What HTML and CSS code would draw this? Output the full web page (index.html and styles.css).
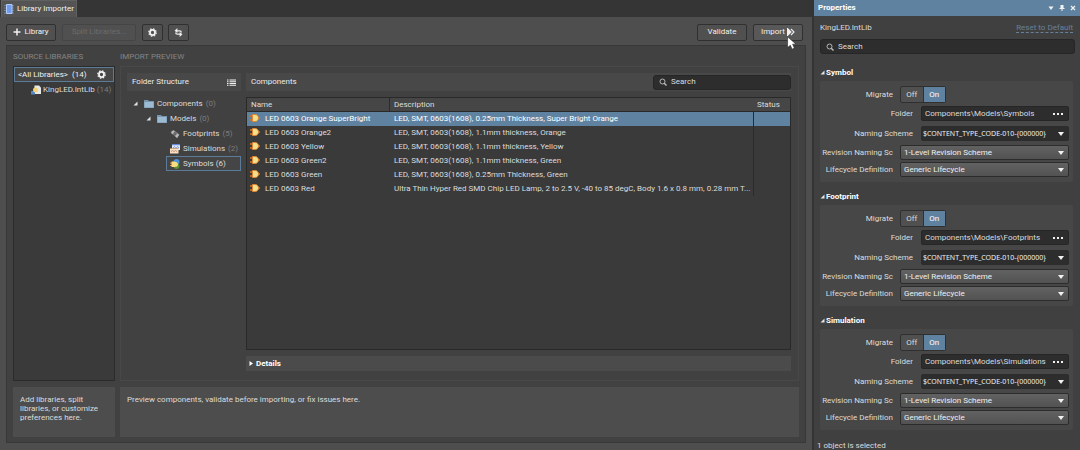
FILE: index.html
```html
<!DOCTYPE html>
<html lang="en">
<head>
<meta charset="utf-8">
<title>Library Importer</title>
<link rel="stylesheet" href="styles.css">
</head>
<body>
<svg class="defs" aria-hidden="true">
  <symbol id="gear" viewBox="0 0 16 16"><g fill="none" stroke="currentColor"><circle cx="8" cy="8" r="4.5" stroke-width="3.2"/><circle cx="8" cy="8" r="6.7" stroke-width="2" stroke-dasharray="2.7 2.56"/></g></symbol>
  <symbol id="search" viewBox="0 0 16 16"><circle cx="7" cy="7" r="5" fill="none" stroke="currentColor" stroke-width="2"/><path d="M10.5 10.5L15 15" stroke="currentColor" stroke-width="3"/></symbol>
  <symbol id="folder" viewBox="0 0 20 16"><path d="M0 0h8l2 2h10v14H0z" fill="#7795ad"/><path d="M1 4h18v11H1z" fill="#9dbbd3"/></symbol>
  <symbol id="gate" viewBox="0 0 20 16"><path d="M0 4h6M0 12h6M14 8h6" stroke="#d87624" stroke-width="3"/><path d="M5 1h5c5 0 7 4 7 7s-2 7-7 7H5V1z" fill="#f3e08c" stroke="#df8430" stroke-width="2"/></symbol>
  <symbol id="expand" viewBox="0 0 10 10"><path d="M9 1v8H1z" fill="#e4e4e4"/></symbol>
</svg>
<div class="app">
  <section class="workspace">
    <header class="tabs">
      <div class="tab">
        <svg class="tab-icon" viewBox="0 0 20 20"><path d="M0 3h20M0 8h20M0 13h20M0 18h20" stroke="#8594ab" stroke-width="1.5"/><path d="M5 1h11v18H5z" fill="#6f9df0" stroke="#b3cdfb" stroke-width="2"/></svg>
        Library Importer
      </div>
    </header>
    <div class="toolbar">
      <button class="btn btn-library" type="button"><svg class="i8" viewBox="0 0 16 16"><path d="M8 1v14M1 8h14" stroke="currentColor" stroke-width="3"/></svg>Library</button>
      <button class="btn btn-split" type="button" disabled>Split Libraries...</button>
      <button class="btn btn-icon" type="button" aria-label="Settings"><svg class="i9"><use href="#gear"/></svg></button>
      <button class="btn btn-icon" type="button" aria-label="Refresh"><svg class="i9" viewBox="0 0 16 16"><g fill="none" stroke="currentColor" stroke-width="2.2"><path d="M4 5h6q3 0 3 3M12 11H6Q3 11 3 8"/></g><path d="M6 0v9L1 5zM10 7v9l5-5z" fill="currentColor"/></svg></button>
      <span class="spacer"></span>
      <button class="btn btn-action" type="button">Validate</button>
      <button class="btn btn-action btn-import" type="button">Import<svg class="i8" viewBox="0 0 16 16"><path d="M1 1l7 7-7 7zM8 2l6 6-6 6" fill="none" stroke="currentColor" stroke-width="2.2"/><path d="M1 1l7 7-7 7z" fill="currentColor"/></svg>
        <svg class="pointer" viewBox="0 0 16 24"><path d="M1 1v19l5-4 3 7 4-2-3-7h6z" fill="#fff" stroke="#222"/></svg></button>
    </div>
    <main class="board">
      <h2 class="caption">SOURCE LIBRARIES</h2>
      <h2 class="caption">IMPORT PREVIEW</h2>
      <div class="sources">
        <div class="source source-selected">&lt;All Libraries&gt; <span class="source-count">(14)</span><span class="spacer"></span><button class="plain" type="button" aria-label="Library settings"><svg class="i9"><use href="#gear"/></svg></button></div>
        <div class="source source-child"><svg class="i10" viewBox="0 0 20 20"><path d="M7 1h9l4 4v13H6z" fill="#e6e9e6"/><path d="M0 12h8v7H0z" fill="#5187c7"/><circle cx="9" cy="10" r="5" fill="#f5d477"/></svg>KingLED.IntLib <span class="muted">(14)</span></div>
      </div>
      <div class="preview">
        <div class="folders">
          <div class="bar">Folder Structure<span class="spacer"></span><button class="plain" type="button" aria-label="List view"><svg class="i9" viewBox="0 0 18 16"><path d="M0 3h3M5 3h13M0 6.5h3M5 6.5h13M0 10h3M5 10h13M0 13.5h3M5 13.5h13" stroke="currentColor" stroke-width="2"/></svg></button></div>
          <ul class="tree">
            <li class="node"><svg class="i4"><use href="#expand"/></svg><svg class="i10"><use href="#folder"/></svg>Components <span class="muted">(0)</span></li>
            <li class="node level-2"><svg class="i4"><use href="#expand"/></svg><svg class="i10"><use href="#folder"/></svg>Models <span class="muted">(0)</span></li>
            <li class="node level-3"><svg class="i10" viewBox="0 0 20 20"><path d="M1 6l6-4 12 9-5 7z" fill="#8d8d8d"/><path d="M6 3L2 8l4 3 4-6zM14 9l-4 5 4 4 4-6z" fill="#b7b7b7"/><path d="M9 5l5 4-4 5-4-4z" fill="#696969"/></svg>Footprints <span class="muted">(5)</span></li>
            <li class="node level-3"><svg class="i10" viewBox="0 0 20 20"><path d="M4 0h16v12H4z" fill="#dfe8fa"/><path d="M4 1h16" stroke="#6389d9" stroke-width="3"/><path d="M6 8l3-3 3 4 3-4 3 3" fill="none" stroke="#6389d9" stroke-width="1.5"/><path d="M0 9h17v10H0z" fill="#f8dfc5"/><path d="M0 9h17M2 16l3-4 3 4 3-4 3 4" fill="none" stroke="#bd9069" stroke-width="1.5"/></svg>Simulations <span class="muted">(2)</span></li>
            <li class="node level-3 node-selected"><svg class="i10" viewBox="0 0 20 20"><circle cx="13" cy="6" r="6" fill="#4d93de"/><circle cx="13" cy="14" r="6" fill="#5b8f39"/><path d="M0 8h4M0 13h4" stroke="#da9850" stroke-width="2"/><path d="M3 5h6q7 1 7 6t-7 5H3z" fill="#f8dc80"/></svg>Symbols (6)</li>
          </ul>
        </div>
        <div class="components">
          <div class="bar">Components<span class="spacer"></span><label class="search search-table"><svg class="i8"><use href="#search"/></svg><input type="text" placeholder="Search" aria-label="Search components"></label></div>
          <div class="grid">
            <table>
              <colgroup><col class="col-name"><col><col class="col-status"></colgroup>
              <thead><tr><th>Name</th><th>Description</th><th>Status</th></tr></thead>
              <tbody>
                <tr class="row-selected"><td><svg class="gate"><use href="#gate"/></svg>LED 0603 Orange SuperBright</td><td>LED, SMT, 0603(1608), 0.25mm Thickness, Super Bright Orange</td><td></td></tr>
                <tr><td><svg class="gate"><use href="#gate"/></svg>LED 0603 Orange2</td><td>LED, SMT, 0603(1608), 1.1mm thickness, Orange</td><td></td></tr>
                <tr><td><svg class="gate"><use href="#gate"/></svg>LED 0603 Yellow</td><td>LED, SMT, 0603(1608), 1.1mm thickness, Yellow</td><td></td></tr>
                <tr><td><svg class="gate"><use href="#gate"/></svg>LED 0603 Green2</td><td>LED, SMT, 0603(1608), 1.1mm thickness, Green</td><td></td></tr>
                <tr><td><svg class="gate"><use href="#gate"/></svg>LED 0603 Green</td><td>LED, SMT, 0603(1608), 0.25mm Thickness, Green</td><td></td></tr>
                <tr><td><svg class="gate"><use href="#gate"/></svg>LED 0603 Red</td><td>Ultra Thin Hyper Red SMD Chip LED Lamp, 2 to 2.5 V, -40 to 85 degC, Body 1.6 x 0.8 mm, 0.28 mm T...</td><td></td></tr>
              </tbody>
            </table>
          </div>
          <button class="details" type="button"><svg class="i4" viewBox="0 0 10 10"><path d="M1 0l7 5-7 5z" fill="currentColor"/></svg>Details</button>
        </div>
      </div>
      <p class="hint">Add libraries, split libraries, or customize preferences here.</p>
      <p class="hint">Preview components, validate before importing, or fix issues here.</p>
    </main>
  </section>
  <aside class="properties">
    <header class="panel-title">Properties<span class="spacer"></span>
      <button class="plain" type="button" aria-label="Menu"><svg class="i6" viewBox="0 0 12 12"><path d="M1 3h10l-5 7z" fill="currentColor"/></svg></button>
      <button class="plain" type="button" aria-label="Pin"><svg class="i6" viewBox="0 0 12 12"><path d="M3 0h6v6h2v2H7v4H5V8H1V6h2z" fill="currentColor"/></svg></button>
      <button class="plain" type="button" aria-label="Close"><svg class="i6" viewBox="0 0 12 12"><path d="M2 2l8 8M10 2l-8 8" stroke="currentColor" stroke-width="2.4"/></svg></button>
    </header>
    <div class="panel-body">
      <div class="object">KingLED.IntLib<span class="spacer"></span><a class="reset" href="#">Reset to Default</a></div>
      <label class="search search-panel"><svg class="i8"><use href="#search"/></svg><input type="text" placeholder="Search" aria-label="Search properties"></label>
      <section class="group">
        <h3><svg class="i4"><use href="#expand"/></svg>Symbol</h3>
        <div class="fields">
          <div class="field migrate"><span class="label">Migrate</span><div class="toggle"><button type="button">Off</button><button class="on" type="button" aria-pressed="true">On</button></div></div>
          <div class="field wide"><label class="label" for="f1">Folder</label><div class="path"><input id="f1" type="text" value="Components\Models\Symbols"><button class="plain dots" type="button" aria-label="Browse"></button></div></div>
          <div class="field wide naming"><label class="label" for="n1">Naming Scheme</label><div class="pick dark"><select id="n1"><option>$CONTENT_TYPE_CODE-010-{000000}</option></select></div></div>
          <div class="field"><label class="label" for="r1">Revision Naming Sc</label><div class="pick"><select id="r1"><option>1-Level Revision Scheme</option></select></div></div>
          <div class="field"><label class="label" for="l1">Lifecycle Definition</label><div class="pick"><select id="l1"><option>Generic Lifecycle</option></select></div></div>
        </div>
      </section>
      <section class="group">
        <h3><svg class="i4"><use href="#expand"/></svg>Footprint</h3>
        <div class="fields">
          <div class="field migrate"><span class="label">Migrate</span><div class="toggle"><button type="button">Off</button><button class="on" type="button" aria-pressed="true">On</button></div></div>
          <div class="field wide"><label class="label" for="f2">Folder</label><div class="path"><input id="f2" type="text" value="Components\Models\Footprints"><button class="plain dots" type="button" aria-label="Browse"></button></div></div>
          <div class="field wide naming"><label class="label" for="n2">Naming Scheme</label><div class="pick dark"><select id="n2"><option>$CONTENT_TYPE_CODE-010-{000000}</option></select></div></div>
          <div class="field"><label class="label" for="r2">Revision Naming Sc</label><div class="pick"><select id="r2"><option>1-Level Revision Scheme</option></select></div></div>
          <div class="field"><label class="label" for="l2">Lifecycle Definition</label><div class="pick"><select id="l2"><option>Generic Lifecycle</option></select></div></div>
        </div>
      </section>
      <section class="group">
        <h3><svg class="i4"><use href="#expand"/></svg>Simulation</h3>
        <div class="fields">
          <div class="field migrate"><span class="label">Migrate</span><div class="toggle"><button type="button">Off</button><button class="on" type="button" aria-pressed="true">On</button></div></div>
          <div class="field wide"><label class="label" for="f3">Folder</label><div class="path"><input id="f3" type="text" value="Components\Models\Simulations"><button class="plain dots" type="button" aria-label="Browse"></button></div></div>
          <div class="field wide naming"><label class="label" for="n3">Naming Scheme</label><div class="pick dark"><select id="n3"><option>$CONTENT_TYPE_CODE-010-{000000}</option></select></div></div>
          <div class="field"><label class="label" for="r3">Revision Naming Sc</label><div class="pick"><select id="r3"><option>1-Level Revision Scheme</option></select></div></div>
          <div class="field"><label class="label" for="l3">Lifecycle Definition</label><div class="pick"><select id="l3"><option>Generic Lifecycle</option></select></div></div>
        </div>
      </section>
    </div>
    <footer class="status">1 object is selected</footer>
  </aside>
</div>
</body>
</html>
```

FILE: styles.css
```css
* { box-sizing: border-box; }
body { margin: 0; background: #414141; color: #dcdcdc; font: 8px/10px Roboto, "Noto Sans", sans-serif; }
button, input, select { font: inherit; color: inherit; margin: 0; padding: 0; border: 0; background: none; border-radius: 0; }
svg { flex: none; display: block; }
h2, h3, p, ul { margin: 0; padding: 0; font: inherit; }
.defs { position: absolute; width: 0; height: 0; }
.spacer { flex: 1; }
.muted { color: #7d7d7d; }
.i4 { width: 5px; height: 5px; }
.i6 { width: 6px; height: 6px; }
.i8 { width: 8px; height: 8px; }
.i9 { width: 9px; height: 9px; }
.i10 { width: 10px; height: 10px; }
.plain { display: flex; align-items: center; color: #f2f2f2; }

.app { display: grid; grid-template-columns: minmax(0, 1fr) 268px; min-height: 100vh; }
.workspace { display: flex; flex-direction: column; background: #4e4e4e; min-width: 0; }
.tabs { display: flex; height: 17px; background: #353535; }
.tab { display: flex; align-items: center; gap: 3px; padding: 0 2px; margin-left: 1px; background: #545454; border: 1px solid #606060; border-bottom: 0; color: #f0f0f0; }
.tab-icon { width: 10px; height: 10px; }
.toolbar { display: flex; align-items: center; gap: 6px; height: 28px; padding: 2px 9px 0 6px; }
.btn { display: flex; align-items: center; justify-content: center; height: 17px; border: 1px solid #303030; border-radius: 2px; background: #505050; color: #f0f0f0; }
.btn-library { width: 50px; gap: 3px; }
.btn-split { width: 74px; border-color: #454545; color: #6b6b6b; }
.btn-icon { width: 21px; }
.btn-icon + .btn-icon { margin-left: -1px; }
.btn-action { width: 50px; }
.btn-import { position: relative; background: #585858; gap: 2px; }
.pointer { position: absolute; left: 33px; top: 11px; width: 9px; height: 14px; }

.board { flex: 1; display: grid; grid-template-columns: 102px minmax(0, 1fr); grid-template-rows: 20px minmax(0, 1fr) 50px; column-gap: 5px; padding: 0 6px 5px 6px; margin: 0 6px 7px 6px; border: 1px solid #383838; background: #414141; }
.caption { padding-top: 6px; color: #858585; }
.sources { border: 1px solid #2b2b2b; background: #3a3a3a; margin-bottom: 6px; }
.source { display: flex; align-items: center; height: 15px; }
.source-selected { border: 1px solid #5b7b99; background: #464646; padding: 0 7px 0 3px; color: #efefef; }
.source-count { margin-left: 4px; }
.source-child { padding-left: 17px; gap: 2px; }
.preview { display: grid; grid-template-columns: 114px minmax(0, 1fr); gap: 5px; padding: 6px 7px 9px 6px; border: 1px solid #484848; margin-bottom: 6px; }
.bar { display: flex; align-items: center; height: 18px; padding: 0 5px; background: #484848; color: #ebebeb; }
.tree { list-style: none; padding-top: 5px; }
.node { display: flex; align-items: center; gap: 3px; height: 15px; margin-left: 6px; }
.node .i4 { margin-right: 3px; }
.level-2 { margin-left: 19px; }
.level-3 { padding-left: 3px; margin-left: 39px; border: 1px solid transparent; }
.node-selected { border-color: #5b7b99; background: #454545; }
.components { display: flex; flex-direction: column; min-width: 0; }
.search { display: flex; align-items: center; gap: 4px; height: 15px; padding: 0 5px; background: #2d2d2d; border: 1px solid #262626; border-radius: 3px; color: #b8b8b8; }
.search input { flex: 1; min-width: 0; outline: 0; }
.search input::placeholder { color: #dcdcdc; opacity: 1; }
.search-table { width: 138px; margin-right: -5px; }
.grid { flex: 1; margin: 6px 0; border: 1px solid #292929; background: #3a3a3a; }
table { width: 100%; table-layout: fixed; border-collapse: separate; border-spacing: 0; }
.col-name { width: 142px; }
.col-status { width: 37px; }
th, td { height: 14px; padding: 0 0 0 4px; text-align: left; font-weight: 400; line-height: 10px; white-space: nowrap; overflow: hidden; text-overflow: ellipsis; }
th { background: #464646; border-bottom: 1px solid #292929; }
th:nth-child(2) { border-left: 1px solid #2b2b2b; }
td:nth-child(2) { border-left: 1px solid transparent; }
td:nth-child(3) { border-left: 1px solid #2b2b2b; }
.row-selected { background: #6082a1; color: #fff; }
.gate { display: inline-block; width: 10px; height: 8px; margin: 0 5px 0 -1px; vertical-align: -1px; }
.details { display: flex; align-items: center; gap: 2px; height: 15px; padding: 0 3px; background: #4b4b4b; color: #fff; font-weight: 700; }
.hint { padding: 8px 7px; line-height: 9px; background: #4d4d4d; }

.properties { border-left: 2px solid #343434; background: #404040; display: flex; flex-direction: column; min-width: 0; }
.panel-title { display: flex; align-items: center; gap: 5px; height: 16px; padding: 0 4px; background: #6082a1; color: #fff; font-weight: 700; }
.panel-body { padding: 0 7px 0 6px; }
.object { display: flex; align-items: center; height: 23px; }
.reset { color: #66819b; text-decoration: none; border-bottom: 1px dashed #66819b; line-height: 9px; }
.search-panel { margin-right: -2px; }
.group { padding-top: 11px; }
.group + .group { padding-top: 7px; }
.group h3 { display: flex; align-items: center; gap: 1px; height: 15px; color: #fff; font-weight: 700; }
.fields { display: flex; flex-direction: column; gap: 2px; margin-top: 1px; padding: 5px 4px 5px 1px; background: #474747; border-radius: 2px; }
.field { display: grid; grid-template-columns: 72px minmax(0, 1fr); column-gap: 7px; align-items: center; }
.wide { grid-template-columns: 92px minmax(0, 1fr); column-gap: 8px; margin-top: 1px; }
.naming { margin: 3px 0 2px; }
.label { text-align: right; white-space: nowrap; }
.toggle { display: flex; width: 46px; height: 17px; border: 1px solid #303030; border-radius: 2px; background: #505050; }
.toggle button { flex: 1; }
.toggle .on { background: #6082a1; color: #fff; border-left: 1px solid #303030; }
.path { display: flex; align-items: center; height: 15px; padding: 0 5px 0 3px; background: #2d2d2d; border: 1px solid #262626; border-radius: 2px; }
.path input { flex: 1; min-width: 0; outline: 0; }
.dots { height: 10px; width: 11px; background: radial-gradient(circle, #f2f2f2 1px, transparent 1px) 0 0 / 4px 10px; }
.pick { position: relative; height: 15px; border: 1px solid #2c2c2c; border-radius: 2px; background: linear-gradient(#626262, #525252); }
.pick::after { content: ""; position: absolute; right: 4px; top: 5px; width: 6px; height: 4px; background: #f2f2f2; clip-path: polygon(0 0, 100% 0, 50% 100%); pointer-events: none; }
.pick select { display: block; appearance: none; width: 100%; height: 13px; padding: 0 12px 0 3px; outline: 0; color: #f0f0f0; }
.pick.dark { background: #2d2d2d; }
.pick.dark select { padding: 0 10px 0 1px; font-family: "Noto Sans", sans-serif; font-size: 7px; }
.status { padding: 11px 3px 0; line-height: 9px; }
```
